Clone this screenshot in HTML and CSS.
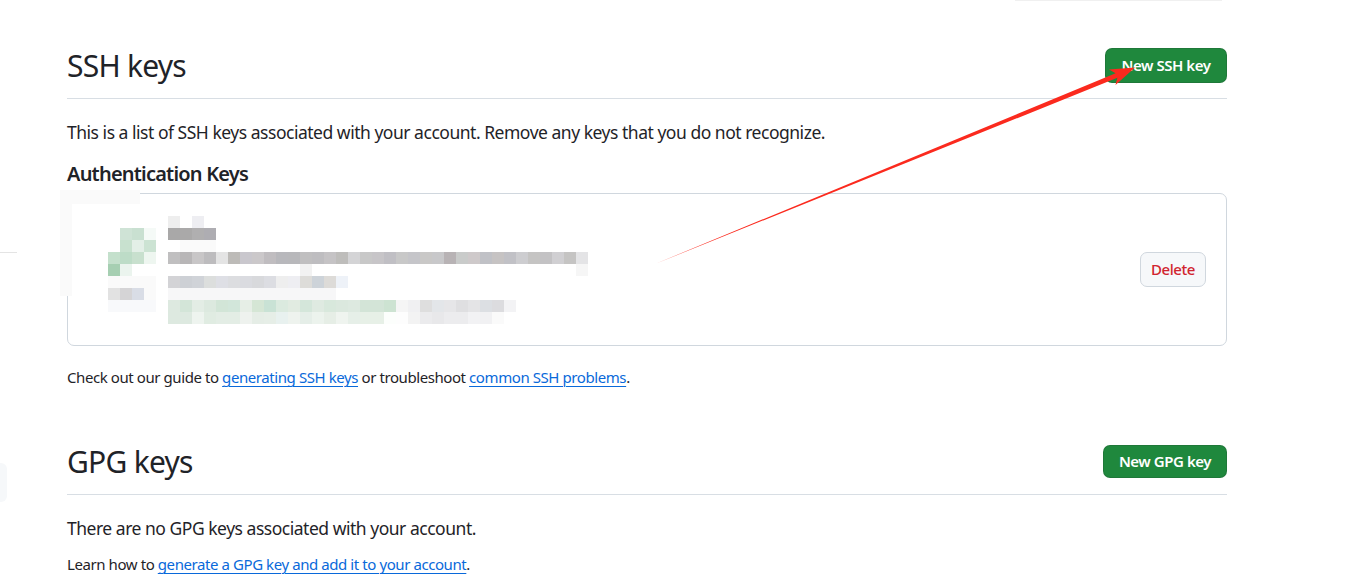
FILE: index.html
```html
<!DOCTYPE html>
<html lang="en">
<head>
<meta charset="utf-8">
<title>SSH and GPG keys</title>
<link rel="stylesheet" href="styles.css">
</head>
<body>
<div class="page">
  <div class="top-remnant"></div>

  <section class="section">
    <div class="subhead">
      <h2 class="subhead-heading">SSH keys</h2>
      <a class="btn btn-primary btn-ssh" href="#">New SSH key</a>
    </div>
    <p class="lead">This is a list of SSH keys associated with your account. Remove any keys that you do not recognize.</p>
    <h3 class="group-title">Authentication Keys</h3>
    <div class="key-box">
      <div class="key-item">
        <svg class="mosaic" width="500" height="111" viewBox="88 214 500 111" aria-hidden="true">
          <rect x="168" y="216" width="12" height="12" fill="#eeeeee"/>
          <rect x="192" y="216" width="12" height="12" fill="#eeeef2"/>
          <rect x="120" y="228" width="12" height="12" fill="#cfe3d6"/>
          <rect x="132" y="228" width="12" height="12" fill="#c9e0d1"/>
          <rect x="144" y="228" width="12" height="12" fill="#f5faf7"/>
          <rect x="168" y="228" width="12" height="12" fill="#a9a8a8"/>
          <rect x="180" y="228" width="12" height="12" fill="#aaa9a9"/>
          <rect x="192" y="228" width="12" height="12" fill="#b0afb0"/>
          <rect x="204" y="228" width="12" height="12" fill="#aeadb2"/>
          <rect x="120" y="240" width="12" height="12" fill="#c8e1cf"/>
          <rect x="132" y="240" width="12" height="12" fill="#e3efe7"/>
          <rect x="144" y="240" width="12" height="12" fill="#cce3d3"/>
          <rect x="180" y="240" width="36" height="12" fill="#fafafa"/>
          <rect x="108" y="252" width="12" height="12" fill="#c4e0cc"/>
          <rect x="120" y="252" width="12" height="12" fill="#bddcc7"/>
          <rect x="132" y="252" width="12" height="12" fill="#c8e0ce"/>
          <rect x="144" y="252" width="12" height="12" fill="#eef6f0"/>
          <rect x="168" y="252" width="12" height="12" fill="#c0bfc0"/>
          <rect x="180" y="252" width="12" height="12" fill="#b8b6b7"/>
          <rect x="192" y="252" width="12" height="12" fill="#c8c6c7"/>
          <rect x="204" y="252" width="12" height="12" fill="#bdbcbe"/>
          <rect x="216" y="252" width="12" height="12" fill="#e4e4e4"/>
          <rect x="228" y="252" width="12" height="12" fill="#bdbbb8"/>
          <rect x="240" y="252" width="12" height="12" fill="#c9c7cd"/>
          <rect x="252" y="252" width="12" height="12" fill="#cbc8ca"/>
          <rect x="264" y="252" width="12" height="12" fill="#c0bdc0"/>
          <rect x="276" y="252" width="12" height="12" fill="#b8b8bc"/>
          <rect x="288" y="252" width="12" height="12" fill="#b8b8bb"/>
          <rect x="300" y="252" width="12" height="12" fill="#c0bfc0"/>
          <rect x="312" y="252" width="12" height="12" fill="#bebdc0"/>
          <rect x="324" y="252" width="12" height="12" fill="#c5c3c5"/>
          <rect x="336" y="252" width="12" height="12" fill="#bebdbb"/>
          <rect x="348" y="252" width="12" height="12" fill="#d4d4d6"/>
          <rect x="360" y="252" width="12" height="12" fill="#c8c8c8"/>
          <rect x="372" y="252" width="12" height="12" fill="#c7c5c8"/>
          <rect x="384" y="252" width="12" height="12" fill="#c0bfc4"/>
          <rect x="396" y="252" width="12" height="12" fill="#c8c8c8"/>
          <rect x="408" y="252" width="12" height="12" fill="#c5c5c9"/>
          <rect x="420" y="252" width="12" height="12" fill="#c9c8c7"/>
          <rect x="432" y="252" width="12" height="12" fill="#c8c8ca"/>
          <rect x="444" y="252" width="12" height="12" fill="#b8b3b5"/>
          <rect x="456" y="252" width="12" height="12" fill="#c9cbca"/>
          <rect x="468" y="252" width="12" height="12" fill="#cec9ca"/>
          <rect x="480" y="252" width="12" height="12" fill="#c0c1c6"/>
          <rect x="492" y="252" width="12" height="12" fill="#c6c3c3"/>
          <rect x="504" y="252" width="12" height="12" fill="#c1c1c6"/>
          <rect x="516" y="252" width="12" height="12" fill="#cdcdd0"/>
          <rect x="528" y="252" width="12" height="12" fill="#c5c4c3"/>
          <rect x="540" y="252" width="12" height="12" fill="#c3c2c4"/>
          <rect x="552" y="252" width="12" height="12" fill="#d0cfd2"/>
          <rect x="564" y="252" width="12" height="12" fill="#c5c4c3"/>
          <rect x="576" y="252" width="12" height="12" fill="#e4e4e6"/>
          <rect x="108" y="264" width="12" height="12" fill="#a6cfb2"/>
          <rect x="120" y="264" width="12" height="12" fill="#ebf4ee"/>
          <rect x="300" y="264" width="12" height="12" fill="#f2f2f2"/>
          <rect x="576" y="264" width="12" height="12" fill="#f6f6f6"/>
          <rect x="108" y="276" width="48" height="12" fill="#fafafa"/>
          <rect x="168" y="276" width="12" height="12" fill="#d3d3d6"/>
          <rect x="180" y="276" width="12" height="12" fill="#cdd0d5"/>
          <rect x="192" y="276" width="12" height="12" fill="#d0d3d8"/>
          <rect x="204" y="276" width="12" height="12" fill="#dcdedd"/>
          <rect x="216" y="276" width="12" height="12" fill="#dedfe5"/>
          <rect x="228" y="276" width="12" height="12" fill="#dcdde0"/>
          <rect x="240" y="276" width="12" height="12" fill="#dadbe0"/>
          <rect x="252" y="276" width="12" height="12" fill="#d8d9dc"/>
          <rect x="264" y="276" width="12" height="12" fill="#dcdde2"/>
          <rect x="276" y="276" width="12" height="12" fill="#eeeeee"/>
          <rect x="288" y="276" width="12" height="12" fill="#eeeef2"/>
          <rect x="300" y="276" width="12" height="12" fill="#dddcd9"/>
          <rect x="312" y="276" width="12" height="12" fill="#cdd3d9"/>
          <rect x="324" y="276" width="12" height="12" fill="#dddbd8"/>
          <rect x="336" y="276" width="12" height="12" fill="#eef2f8"/>
          <rect x="108" y="288" width="12" height="12" fill="#e2e2e2"/>
          <rect x="120" y="288" width="12" height="12" fill="#d5d4d6"/>
          <rect x="132" y="288" width="12" height="12" fill="#d9dde6"/>
          <rect x="144" y="288" width="12" height="12" fill="#fafafa"/>
          <rect x="168" y="288" width="168" height="12" fill="#f7f7f8"/>
          <rect x="108" y="300" width="48" height="12" fill="#f8f9fb"/>
          <rect x="168" y="300" width="12" height="12" fill="#dde9e0"/>
          <rect x="180" y="300" width="12" height="12" fill="#d3e5d8"/>
          <rect x="192" y="300" width="12" height="12" fill="#e3ede5"/>
          <rect x="204" y="300" width="12" height="12" fill="#dce9df"/>
          <rect x="216" y="300" width="12" height="12" fill="#d2e5d7"/>
          <rect x="228" y="300" width="12" height="12" fill="#d2e6da"/>
          <rect x="240" y="300" width="12" height="12" fill="#e6eee6"/>
          <rect x="252" y="300" width="12" height="12" fill="#d5e6d5"/>
          <rect x="264" y="300" width="12" height="12" fill="#c9e2d5"/>
          <rect x="276" y="300" width="12" height="12" fill="#dbeadf"/>
          <rect x="288" y="300" width="12" height="12" fill="#e1ebe1"/>
          <rect x="300" y="300" width="12" height="12" fill="#d4e6da"/>
          <rect x="312" y="300" width="12" height="12" fill="#dfeae1"/>
          <rect x="324" y="300" width="12" height="12" fill="#d8e8dc"/>
          <rect x="336" y="300" width="12" height="12" fill="#dbe8de"/>
          <rect x="348" y="300" width="12" height="12" fill="#dde9e0"/>
          <rect x="360" y="300" width="12" height="12" fill="#d3e4d7"/>
          <rect x="372" y="300" width="12" height="12" fill="#d3e4d7"/>
          <rect x="384" y="300" width="12" height="12" fill="#cde3d2"/>
          <rect x="396" y="300" width="12" height="12" fill="#f5f5f5"/>
          <rect x="408" y="300" width="12" height="12" fill="#f0f0f2"/>
          <rect x="420" y="300" width="12" height="12" fill="#dedede"/>
          <rect x="432" y="300" width="12" height="12" fill="#e3e6e9"/>
          <rect x="444" y="300" width="12" height="12" fill="#e6e6e8"/>
          <rect x="456" y="300" width="12" height="12" fill="#dfdfe1"/>
          <rect x="468" y="300" width="12" height="12" fill="#e4e4e6"/>
          <rect x="480" y="300" width="12" height="12" fill="#dcdfe3"/>
          <rect x="492" y="300" width="12" height="12" fill="#dcdcdf"/>
          <rect x="504" y="300" width="12" height="12" fill="#f3f3f5"/>
          <rect x="168" y="312" width="12" height="12" fill="#dde9e0"/>
          <rect x="180" y="312" width="12" height="12" fill="#dde9e0"/>
          <rect x="192" y="312" width="12" height="12" fill="#eef4ef"/>
          <rect x="204" y="312" width="12" height="12" fill="#e0ece2"/>
          <rect x="216" y="312" width="12" height="12" fill="#e3ede5"/>
          <rect x="228" y="312" width="12" height="12" fill="#e3ede5"/>
          <rect x="240" y="312" width="12" height="12" fill="#eef2ee"/>
          <rect x="252" y="312" width="12" height="12" fill="#e5ede6"/>
          <rect x="264" y="312" width="12" height="12" fill="#e6eee7"/>
          <rect x="276" y="312" width="12" height="12" fill="#e8f1ef"/>
          <rect x="288" y="312" width="12" height="12" fill="#eef3ee"/>
          <rect x="300" y="312" width="12" height="12" fill="#e5eee8"/>
          <rect x="312" y="312" width="12" height="12" fill="#ecf3ed"/>
          <rect x="324" y="312" width="12" height="12" fill="#e6eee6"/>
          <rect x="336" y="312" width="12" height="12" fill="#eff4ef"/>
          <rect x="348" y="312" width="12" height="12" fill="#e6efe8"/>
          <rect x="360" y="312" width="12" height="12" fill="#e7f0e7"/>
          <rect x="372" y="312" width="12" height="12" fill="#e7f0e7"/>
          <rect x="384" y="312" width="12" height="12" fill="#fcfefc"/>
          <rect x="396" y="312" width="12" height="12" fill="#fdfdfd"/>
          <rect x="408" y="312" width="12" height="12" fill="#f3f3f3"/>
          <rect x="420" y="312" width="12" height="12" fill="#ebebed"/>
          <rect x="432" y="312" width="12" height="12" fill="#e8e8ea"/>
          <rect x="444" y="312" width="12" height="12" fill="#ececee"/>
          <rect x="456" y="312" width="12" height="12" fill="#ececee"/>
          <rect x="468" y="312" width="12" height="12" fill="#f2f2f4"/>
          <rect x="480" y="312" width="12" height="12" fill="#f1f1f3"/>
          <rect x="492" y="312" width="12" height="12" fill="#fafafa"/>
        </svg>
        <button class="btn btn-danger" type="button">Delete</button>
      </div>
    </div>
    <p class="note">Check out our guide to <a href="#">generating SSH keys</a> or troubleshoot <a href="#">common SSH problems</a>.</p>
  </section>

  <section class="section section-spacious">
    <div class="subhead">
      <h2 class="subhead-heading">GPG keys</h2>
      <a class="btn btn-primary btn-gpg" href="#">New GPG key</a>
    </div>
    <p class="lead">There are no GPG keys associated with your account.</p>
    <p class="note note-tight">Learn how to <a href="#">generate a GPG key and add it to your account</a>.</p>
  </section>

  <div class="shade shade-top"></div>
  <div class="shade shade-left"></div>
  <div class="edge-line"></div>
  <div class="edge-tab"></div>

  <svg class="annotation" width="1346" height="584" viewBox="0 0 1346 584" aria-hidden="true">
    <polygon points="655,264 1115.6,73.2 1109,69.5 1135,67.5 1115.5,85 1117.4,77.8" fill="#fb2a1e"/>
  </svg>
</div>
</body>
</html>
```

FILE: styles.css
```css
* {
  box-sizing: border-box;
}

html, body {
  margin: 0;
  padding: 0;
  background: #ffffff;
}

body {
  font-family: "Noto Sans", "Open Sans", sans-serif;
  color: #1f2328;
  font-size: 17.5px;
}

.page {
  position: relative;
  width: 1346px;
  height: 584px;
  overflow: hidden;
  padding-left: 67px;
}

.top-remnant {
  width: 207px;
  height: 1px;
  margin-left: 948px;
  background: #f0f0f0;
}

.section {
  width: 1160px;
  margin-top: 42px;
}

.section-spacious {
  margin-top: 51px;
}

.subhead {
  display: flex;
  align-items: center;
  justify-content: space-between;
  padding-bottom: 10px;
  border-bottom: 1px solid #d8dee4;
  margin-bottom: 20px;
}

.subhead-heading {
  margin: 0;
  font-size: 30px;
  font-weight: 400;
  line-height: 45px;
  letter-spacing: -0.75px;
}

.btn {
  display: inline-flex;
  align-items: center;
  justify-content: center;
  border-radius: 7px;
  font-family: inherit;
  font-size: 15px;
  font-weight: 600;
  text-decoration: none;
  line-height: 1;
  padding: 0;
  white-space: nowrap;
  letter-spacing: -0.45px;
}

.btn-primary {
  background: #1f883d;
  color: #ffffff;
  border: 1px solid rgba(31, 35, 40, 0.15);
}

.btn-ssh {
  width: 122px;
  height: 35px;
}

.btn-gpg {
  width: 124px;
  height: 33px;
}

.btn-danger {
  background: #f6f8fa;
  color: #d1242f;
  border: 1px solid #d0d7de;
  width: 66px;
  height: 35px;
  font-weight: 500;
}

.lead {
  margin: 0;
  font-size: 17.5px;
  line-height: 26px;
  letter-spacing: -0.48px;
}

.group-title {
  margin: 15px 0 5px;
  font-size: 20px;
  font-weight: 600;
  line-height: 28px;
  letter-spacing: -0.8px;
}

.key-box {
  border: 1px solid #d0d7de;
  border-radius: 7px;
  height: 153px;
  padding: 20px 20px;
}

.key-item {
  display: flex;
  align-items: center;
  justify-content: space-between;
  height: 100%;
}

.mosaic {
  display: block;
  align-self: flex-start;
}

.note {
  margin: 20px 0 0;
  font-size: 15px;
  line-height: 22px;
  letter-spacing: -0.42px;
}

.note-tight {
  margin-top: 12px;
}

.note a {
  color: #0969da;
  text-decoration: underline;
  text-underline-offset: 3px;
  text-decoration-thickness: 1px;
}

.shade {
  position: absolute;
  background: #fafafa;
}

.shade-top {
  left: 60px;
  top: 190px;
  width: 80px;
  height: 14px;
}

.shade-left {
  left: 60px;
  top: 190px;
  width: 12px;
  height: 106px;
}

.edge-line {
  position: absolute;
  left: 0;
  top: 252px;
  width: 17px;
  height: 1px;
  background: #e4e4e4;
}

.edge-tab {
  position: absolute;
  left: -8px;
  top: 463px;
  width: 15px;
  height: 39px;
  border-radius: 6px;
  background: #f6f8fa;
}

.annotation {
  position: absolute;
  left: 0;
  top: 0;
  pointer-events: none;
}
```
